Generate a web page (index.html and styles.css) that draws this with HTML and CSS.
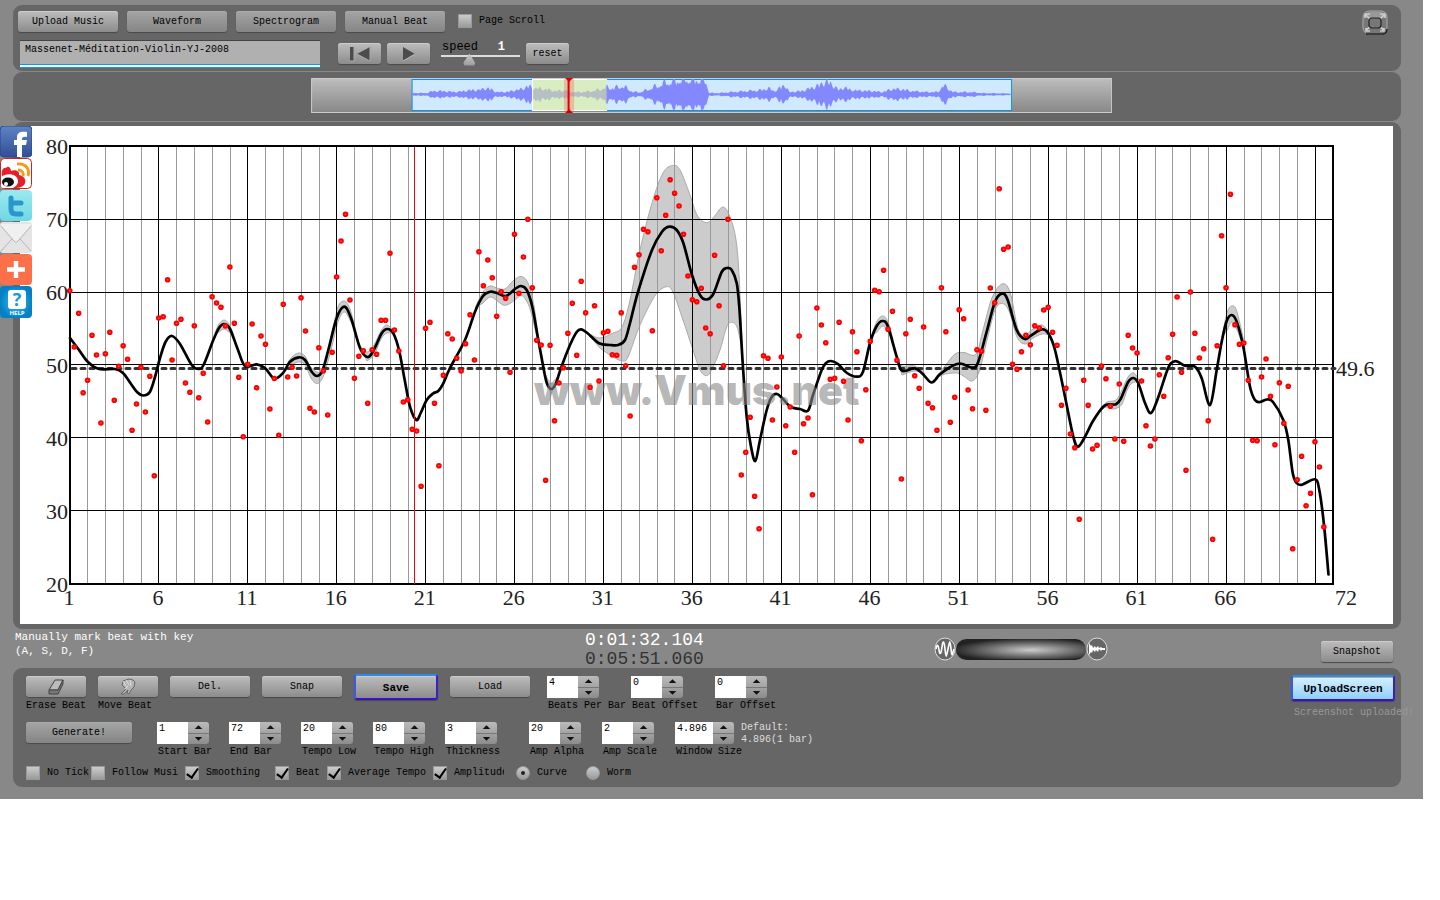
FILE: index.html
```html
<!DOCTYPE html>
<html lang="en">
<head>
<meta charset="utf-8">
<title>Vmus.net</title>
<link rel="stylesheet" href="styles.css">
</head>
<body>
<main class="app">
  <section class="panel toolbar">
    <div class="toolbar-main">
      <div class="tabs">
        <button class="btn tab lit">Upload Music</button>
        <button class="btn tab">Waveform</button>
        <button class="btn tab">Spectrogram</button>
        <button class="btn tab">Manual Beat</button>
        <label class="check"><input type="checkbox"><span>Page Scroll</span></label>
      </div>
      <div class="player">
        <input class="title" type="text" aria-label="Track" value="Massenet-Méditation-Violin-YJ-2008">
        <div class="transport">
          <button class="btn small" aria-label="Rewind"><svg width="22" height="16" viewBox="0 0 22 16"><path d="M1 1h4v14H1zM21 1v14L8 8z" fill="#4c4c4c"/><path d="M5 1v14H1M21 1v14L8 8" fill="none" stroke="#aaa"/></svg></button>
          <button class="btn small" aria-label="Play"><svg width="14" height="16" viewBox="0 0 14 16"><path d="M1 1l12 7-12 7z" fill="#4c4c4c"/><path d="M1 15l12-7" stroke="#bbb"/></svg></button>
        </div>
        <div class="speed">
          <div class="speed-text"><label for="speed">speed</label><output for="speed">1</output></div>
          <input id="speed" type="range" min="0" max="3" step="0.1" value="1">
        </div>
        <button class="btn small">reset</button>
      </div>
    </div>
    <button class="fullscreen" aria-label="Full screen"><svg width="28" height="26" viewBox="0 0 28 26"><rect x="2" y="1" width="24" height="23" rx="6" fill="#777" stroke="#aaa"/><path d="M5 24h17q4-1 4-5" fill="none" stroke="#222" stroke-width="1.5"/><path d="M3 8q0-6 7-6h10q5 1 5 6" fill="#999"/><path d="M4 8V4h5M19 4h5v4M5 18v3h4M19 21h4v-3M5 5l4 4M23 5l-4 4M5 20l4-3M23 20l-4-3" fill="none" stroke="#ccc" stroke-width="1.6"/><rect x="8" y="8" width="12" height="10" rx="3" fill="#777" stroke="#222" stroke-width="1.2"/></svg></button>
  </section>

  <section class="panel overview">
    <svg id="overview" class="overview-wave" viewBox="0 0 801 36" role="img" aria-label="Waveform overview"></svg>
  </section>

  <section class="panel chart-panel">
    <svg id="chart" class="chart" viewBox="20 126 1373 498" role="img" aria-label="Tempo curve"></svg>
  </section>

  <section class="status">
    <p class="hint">Manually mark beat with key<br>(A, S, D, F)</p>
    <div class="times"><div class="now">0:01:32.104</div><div class="total">0:05:51.060</div></div>
    <div class="zoom">
      <svg width="22" height="24" viewBox="0 0 22 24"><ellipse cx="11" cy="12" rx="10" ry="11" fill="#666" stroke="#ddd"/><path d="M2 12c1-5 2-5 3 1s2 4 3-3 2-7 3 2 1 10 3 0 2-9 3 0 1 6 3 0" fill="none" stroke="#fff" stroke-width="1.6"/></svg>
      <input class="wheel" type="range" aria-label="Zoom">
      <svg width="22" height="24" viewBox="0 0 22 24"><ellipse cx="11" cy="12" rx="10" ry="11" fill="#666" stroke="#ddd"/><path d="M3 6l2 3 1-1 1 3 2-2 1 2 2-2 1 2 2-1 1 1h3v2h-3l-1 1-2-2-1 3-2-2-1 2-2-2-1 3-1-1-2 3z" fill="#fff"/></svg>
    </div>
    <button class="btn snapshot">Snapshot</button>
  </section>

  <section class="panel controls">
    <div class="rows">
      <div class="row">
        <div class="tool"><button class="btn" id="erase" aria-label="Erase Beat"><svg width="18" height="16" viewBox="0 0 18 16"><path d="M2 11L8 1h8l-5 10z" fill="#bbb" stroke="#444"/><path d="M2 11h9l5-10v4l-5 10H2z" fill="#777" stroke="#444"/></svg></button><label for="erase">Erase Beat</label></div>
        <div class="tool"><button class="btn" id="move" aria-label="Move Beat"><svg width="18" height="18" viewBox="0 0 18 18"><path d="M2 16l5-5-4-4 1-4 3-1 3-1 4 1 2 2-1 5-3 3-2 4-2-1 1-3-4 4z" fill="#b5b5b5" stroke="#666"/><path d="M4 3l3 5M7 2l3 5M11 2l1 6M6 11l3-3" fill="none" stroke="#ddd"/></svg></button><label for="move">Move Beat</label></div>
        <button class="btn wide">Del.</button>
        <button class="btn wide">Snap</button>
        <button class="btn wide ringed">Save</button>
        <button class="btn wide">Load</button>
        <div class="fields top">
          <div class="field"><div class="spin"><input id="bpb" type="text" value="4"><span class="steps"><button aria-label="More"></button><button aria-label="Less"></button></span></div><label for="bpb">Beats Per Bar</label></div>
          <div class="field"><div class="spin"><input id="beo" type="text" value="0"><span class="steps"><button aria-label="More"></button><button aria-label="Less"></button></span></div><label for="beo">Beat Offset</label></div>
          <div class="field"><div class="spin"><input id="bao" type="text" value="0"><span class="steps"><button aria-label="More"></button><button aria-label="Less"></button></span></div><label for="bao">Bar Offset</label></div>
        </div>
      </div>
      <div class="row second">
        <button class="btn generate">Generate!</button>
        <div class="fields bars">
          <div class="field"><div class="spin"><input id="sb" type="text" value="1"><span class="steps"><button aria-label="More"></button><button aria-label="Less"></button></span></div><label for="sb">Start Bar</label></div>
          <div class="field"><div class="spin"><input id="eb" type="text" value="72"><span class="steps"><button aria-label="More"></button><button aria-label="Less"></button></span></div><label for="eb">End Bar</label></div>
          <div class="field"><div class="spin"><input id="tl" type="text" value="20"><span class="steps"><button aria-label="More"></button><button aria-label="Less"></button></span></div><label for="tl">Tempo Low</label></div>
          <div class="field"><div class="spin"><input id="th" type="text" value="80"><span class="steps"><button aria-label="More"></button><button aria-label="Less"></button></span></div><label for="th">Tempo High</label></div>
          <div class="field"><div class="spin"><input id="tk" type="text" value="3"><span class="steps"><button aria-label="More"></button><button aria-label="Less"></button></span></div><label for="tk">Thickness</label></div>
        </div>
        <div class="fields amps">
          <div class="field"><div class="spin"><input id="aa" type="text" value="20"><span class="steps"><button aria-label="More"></button><button aria-label="Less"></button></span></div><label for="aa">Amp Alpha</label></div>
          <div class="field"><div class="spin"><input id="as" type="text" value="2"><span class="steps"><button aria-label="More"></button><button aria-label="Less"></button></span></div><label for="as">Amp Scale</label></div>
          <div class="field"><div class="spin long"><input id="ws" type="text" value="4.896"><span class="steps"><button aria-label="More"></button><button aria-label="Less"></button></span></div><label for="ws">Window Size</label></div>
        </div>
        <p class="default">Default:<br>4.896(1 bar)</p>
      </div>
      <div class="options">
        <label class="check"><input type="checkbox"><span>No Tick</span></label>
        <label class="check"><input type="checkbox"><span>Follow Musi</span></label>
        <label class="check"><input type="checkbox" checked><span>Smoothing</span></label>
        <label class="check"><input type="checkbox" checked><span>Beat</span></label>
        <label class="check"><input type="checkbox" checked><span>Average Tempo</span></label>
        <label class="check"><input type="checkbox" checked><span class="clipped">Amplitude</span></label>
        <label class="check"><input type="radio" name="shape" checked><span>Curve</span></label>
        <label class="check"><input type="radio" name="shape"><span>Worm</span></label>
      </div>
    </div>
    <div class="upload">
      <button class="btn ringed blue">UploadScreen</button>
      <p class="uploaded">Screenshot uploaded!</p>
    </div>
  </section>

  <nav class="social">
    <a href="#" aria-label="Facebook"><svg viewBox="0 0 32 32"><defs><linearGradient id="fb" x2="0" y2="1"><stop stop-color="#5f83c4"/><stop offset="1" stop-color="#314f93"/></linearGradient></defs><rect width="32" height="31" rx="4" fill="url(#fb)" stroke="#2d4784"/><path d="M17 31V19h-3v-5h3v-3c0-4 3-6 10-5v5c-3-.5-5 0-5 2v1h5l-1 5h-4v12z" fill="#fff"/></svg></a>
    <a href="#" aria-label="Weibo"><svg viewBox="0 0 32 32"><rect x=".5" y=".5" width="31" height="30" rx="4" fill="#fff" stroke="#c22"/><path d="M2 18c-1-5 1-9 4-8 2-3 5 0 5 3 4-2 9 0 8 4 6 1 8 6 5 10-3 3-7 3-10 3z" fill="#e6202a"/><path d="M1 19c6-5 17-3 17 4 0 4-3 6-6 7H3q-2 0-2-2z" fill="#fff"/><ellipse cx="8" cy="24" rx="6" ry="4.5" fill="#111"/><circle cx="6" cy="26" r="2" fill="#fff"/><path d="M18 12c4 0 6 3 5 6M17 6c9-1 13 5 11 12" fill="none" stroke="#f39a1c" stroke-width="2.8"/></svg></a>
    <a href="#" aria-label="Twitter"><svg viewBox="0 0 32 32"><defs><linearGradient id="tw" x2="0" y2="1"><stop stop-color="#9beaf0"/><stop offset="1" stop-color="#6ed8e2"/></linearGradient></defs><rect width="32" height="31" rx="4" fill="url(#tw)"/><path d="M11 8v11q0 5 5 5h5M11 13h10" fill="none" stroke="#2a96cb" stroke-width="5" stroke-linecap="round" stroke-linejoin="round"/></svg></a>
    <a href="#" aria-label="E-mail"><svg viewBox="0 0 32 32"><rect width="32" height="31" rx="3" fill="#e4e4e4"/><path d="M1 4l15 17L31 4V2H1z" fill="#f0f0f0"/><path d="M1 4l13 15q2 3 4 0L31 4M1 29l11-12M31 29L20 17" fill="none" stroke="#b5b5b5"/></svg></a>
    <a href="#" aria-label="Share"><svg viewBox="0 0 32 32"><rect width="32" height="31" rx="4" fill="#fb6f4a"/><path d="M16 7v17M7 15.500h18" stroke="#fff" stroke-width="4.500"/></svg></a>
    <a href="#" aria-label="Help"><svg viewBox="0 0 32 32"><defs><radialGradient id="hp"><stop stop-color="#35c4ef"/><stop offset="1" stop-color="#0580c4"/></radialGradient></defs><rect width="32" height="32" rx="4" fill="url(#hp)"/><rect x="8" y="4" width="18" height="19" rx="3" fill="#fff"/><text x="17" y="20" class="help-q">?</text><text x="17" y="29" class="help-t">HELP</text></svg></a>
  </nav>
</main>
<script src="app.js"></script>
</body>
</html>
```
FILE: styles.css
```css
* { box-sizing: border-box; }
body { margin: 0; background: #fff; font: 10px/12px "Liberation Mono", monospace; color: #000; }
p { margin: 0; }
button, input { font: inherit; color: inherit; }
svg { display: block; }

.app { position: relative; width: calc(100% - 17px); padding: 5px 22px 12px 13px; background: #888; }
.panel { background: #666; border-radius: 9px; margin-bottom: 1px; }

.btn { display: inline-flex; align-items: center; justify-content: center; height: 21px; padding: 1px 0 0; border: 0; border-radius: 3px; background: linear-gradient(#a5a5a5, #858585); box-shadow: 0 1px 1px #4a4a4a, inset 0 1px 0 #aaa; flex: none; }
.btn.lit, .transport .btn, .btn.small, .wide, .tool .btn, .snapshot { background: linear-gradient(#bdbdbd, #8c8c8c); box-shadow: 0 1px 1px #4a4a4a, inset 0 1px 0 #ccc; }

.toolbar { display: flex; justify-content: space-between; align-items: flex-start; padding: 5px 12px 2px 5px; }
.tabs { display: flex; align-items: center; gap: 9px; height: 22px; }
.tab { width: 100px; }
.check { display: flex; align-items: center; gap: 7px; white-space: nowrap; }
.tabs .check { margin-left: 4px; }
.check input { appearance: none; position: relative; flex: none; width: 14px; height: 14px; margin: 0; background: linear-gradient(#ccc, #9a9a9a); border: 1px solid #999; }
.check input[type=radio] { border-radius: 50%; }
.check input[type=checkbox]:checked::after { content: ""; position: absolute; left: 3px; top: -1px; width: 5px; height: 10px; border: solid #000; border-width: 0 2px 2px 0; transform: rotate(35deg); }
.check input[type=radio]:checked::after { content: ""; position: absolute; left: 4px; top: 4px; width: 4px; height: 4px; border-radius: 50%; background: #222; }
.player { display: flex; align-items: center; gap: 6px; height: 31px; padding-left: 2px; margin-top: 6px; }
.title { width: 300px; height: 28px; margin-right: 12px; padding: 0 5px 8px; border: 0; border-top: 1px solid #444; border-bottom: 1px solid #0a97f5; background: linear-gradient(#b0b0b0 0 23px, #0a97f5 23px 24px, #fff 24px); }
.transport { display: flex; gap: 6px; margin-right: 5px; }
.small { width: 43px; }
.speed { width: 79px; }
.speed-text { display: flex; justify-content: space-between; padding: 0 15px 0 1px; font-size: 12px; line-height: 12px; }
.speed-text output { color: #fff; font-weight: bold; }
.speed input { appearance: none; display: block; width: 100%; height: 14px; margin: 0; background: linear-gradient(transparent 2px, #ddd 2px 4px, transparent 4px); }
.speed input::-webkit-slider-thumb { appearance: none; width: 12px; height: 12px; background: linear-gradient(#ccc, #999); clip-path: polygon(50% 0, 100% 80%, 90% 100%, 10% 100%, 0 80%); }
.fullscreen { padding: 0; border: 0; background: none; }

.overview { display: flex; justify-content: center; padding: 6px 0 7px 9px; }
.overview-wave { width: 58.1%; height: auto; }

.chart-panel { padding: 4px 8px 5px 7px; margin: 0; }
.chart { width: 100%; height: auto; background: #fff; }
.tick { font-family: "Liberation Serif", serif; font-size: 22px; fill: #222; }
.watermark { font-family: "Inter", sans-serif; font-weight: 900; font-size: 41px; fill: #888; fill-opacity: .62; }

.status { display: grid; grid-template-columns: 572fr 349fr 387fr 72px; align-items: start; height: 39px; padding-right: 8px; }
.hint { padding: 1px 0 0 2px; color: #fff; font-size: 11px; line-height: 14px; }
.times { padding-top: 2px; font-size: 18px; line-height: 19px; }
.now { color: #fff; }
.total { color: #333; }
.zoom { display: flex; align-items: center; padding-top: 8px; }
.wheel { appearance: none; width: 130px; height: 21px; margin: 0; border-radius: 11px; border-bottom: 1px solid #222; background: radial-gradient(ellipse at 58% 55%, #ccc, #888 30%, #222 75%); }
.wheel::-webkit-slider-thumb { appearance: none; width: 1px; height: 1px; opacity: 0; }
.snapshot { margin-top: 12px; }

.controls { display: flex; justify-content: space-between; padding: 8px 6px 7px 13px; margin: 0; }
.row { display: flex; gap: 12px; height: 46px; }
.row.second { height: 44px; }
.tool { display: flex; flex-direction: column; width: 60px; white-space: nowrap; gap: 3px; }
.wide { width: 80px; }
.btn.ringed { width: 84px; height: 26px; margin-top: -2px; border: 2px solid; border-color: #2b8bea #3a20c8 #3a10c8 #3a5ae0; font-weight: bold; font-size: 11px; }
.fields { display: flex; }
.top { margin-left: 5px; }
.top .field { width: 84px; }
.generate { width: 106px; }
.bars { width: 360px; margin-left: 13px; }
.field { width: 73px; white-space: nowrap; }
.field label { display: block; padding-left: 1px; margin-top: 2px; }
.spin { display: flex; width: 52px; height: 22px; }
.spin.long { width: 59px; }
.spin > input { flex: 1; min-width: 0; padding: 0 0 8px 2px; border: 0; background: #fff; }
.steps { display: flex; flex-direction: column; width: 21px; border-radius: 0 3px 3px 0; overflow: hidden; background: linear-gradient(#bbb, #8c8c8c); }
.steps button { flex: 1; display: flex; align-items: center; justify-content: center; padding: 0; border: 0; background: none; }
.steps button::before { content: ""; width: 8px; height: 4px; background: #111; clip-path: polygon(50% 0, 100% 100%, 0 100%); }
.steps button + button { border-top: 1px solid #777; }
.steps button + button::before { clip-path: polygon(0 0, 100% 0, 50% 100%); }
.default { margin-left: -19px; color: #ddd; }
.options { display: flex; }
.options .check { width: 90px; }
.options .check:nth-child(1) { width: 65px; }
.options .check:nth-child(2) { width: 94px; }
.options .check:nth-child(4) { width: 52px; }
.options .check:nth-child(5) { width: 106px; }
.options .check:nth-child(6) { width: 83px; }
.options .check:nth-child(7), .options .check:nth-child(8) { width: 70px; }
.clipped { width: 50px; overflow: hidden; }
.upload { width: 104px; }
.btn.ringed.blue { width: 104px; background: linear-gradient(#d8f1ff, #8fd0fb); margin-top: -1px; }
.uploaded { padding: 6px 0 0 3px; color: #999; white-space: nowrap; }

.social { position: absolute; left: 0; top: 126px; width: 32px; }
.social a { display: block; height: 32px; }
.help-q { font: bold 18px "Open Sans", sans-serif; fill: #149bd7; text-anchor: middle; }
.help-t { font: bold 6px "Open Sans", sans-serif; fill: #fff; text-anchor: middle; }
```
FILE: app.js
```js
const beats = [290.7,347,313.3,392.7,380.3,335.3,355,423,353.7,332.3,400.3,366.3,345.7,359.3,430.3,404,367.3,412,376.3,475.7,
318,316.7,279.7,360,323.3,319.3,383,392.3,325.7,397.7,373.3,422,296.7,303,307.3,326,267,323.3,377.3,436.7,
364.3,324,387.7,336,344.3,409,378.5,435.3,304.3,377,367.3,376,297.7,331,408.3,412,347.7,370.7,415,352.3,
277,241,214.3,300,378.3,356.3,350.7,403.3,349.7,354.3,320.3,320.3,253.3,330,351,402,399.7,429.3,431,486.3,
328.3,322.3,403.3,465.7,375.3,333.7,339,358.3,371,343.7,314.7,360,251.7,285.7,260,277.7,316.3,291.7,298.3,372.3,
234.3,293.3,257,219.3,287.7,340.3,345,480.3,345.3,420.7,383,367.7,333.3,303.3,355.3,281.3,312.7,387.3,305.7,381,
332.7,331.3,354.7,355.3,312.7,365.7,416,267.3,254.7,229.3,231.7,330.7,197.7,250.7,215.3,179.7,193.3,206,234.3,276,
299.7,301.7,288.3,328,333.7,255.3,305.7,365.7,219.3,null,null,475,452.3,417.3,496.3,528.7,355.7,358.3,420,387,
357,425.7,407,452.3,336,423.7,418,494.7,308,325,342.7,379.3,378.3,322.3,381.3,420,331.7,351.7,440.7,389.7,
341.3,290.3,291.7,270.3,329.3,311.3,360.3,479,333.7,319.3,375.7,388.3,327,403.3,407.7,430.3,287.7,331.7,422.3,397.3,
309.7,318.7,390,408.7,349.7,351.3,410.3,288,302.7,188.7,249.3,247,364.3,369.3,351.7,335.3,344.7,325.7,328,310,
307.3,332.3,345.3,405.3,388.3,434,447.7,519.3,380.3,405.3,449,445.3,366,378.7,406.3,439,384,441.3,335.3,348,
353,381,425.7,446,439,374.7,396.3,357.7,334.3,297,372.3,470.3,292,333.3,358,348.7,420.7,539.3,345.7,235.7,
287.7,194.3,324.7,344.3,343,380.3,440.3,440.7,377,359,396.3,444.7,382.7,423.3,386.3,548.7,479.7,456.3,505.7,493.3,
441.7,467,527];

const curve = [70,338,79,350,88,362,99,369,115,369,123,373,131,384,137,392,143.3,395.5,150,391.7,155,377,160,358,165.5,342,172,336,180,344,191.7,365,199,369,204,364,213.3,340,219,328,224,324,230,329,238,350,245,366,256.7,364.3,265,368,274.3,378.5,283.3,372.7,290,361.7,299,357.3,305,360,311.7,371.7,317,376,322.3,371,328.3,350,336.7,318,344.3,306.7,351,318,360,348,367.3,357,373.3,351,381.7,333.3,387.3,329,393.3,333.3,399,350,404.7,380,410,406.7,416.3,420,420.7,413,426.7,400,433,393.5,438.3,391,443.3,383.3,450,368,465,340,475,311.7,483,296,490,291.7,497,293,506,296,515,289,521,286,526.7,290,532.3,306.7,538.3,340,543.3,367,546.7,382.7,551,389,555.7,384,561,368,570,345,576.7,332,581,329.3,587,332.7,599,343.3,610,345,618,345,625,340,630,323,638,292,652,250,662,231.7,669.3,226.7,676.7,230,683.3,243,692,275,700,295,706.3,299.5,713.3,294,721.7,272,727,268,731.7,270,736.7,283,739.3,307,742.7,363,746.7,417,750.7,445,755.3,461,760,440,766.7,410,771.7,397,777,394,783,399,790.7,407,800,409,808,410.7,813,395,821.7,370,826,363,831,361,838,364,847,373,856.7,376.7,863,371.7,870,343,876.7,326,882.7,321,888,326.7,896.7,356.7,902,370.7,915,368.3,923,374.3,931.7,382.5,940,374.3,950,367.3,960,363.5,972.7,367.7,978.3,361.7,986.7,331.7,995,301.7,1002.3,293.7,1007.7,300,1016.7,330,1025,339,1031.7,335,1041.7,329.3,1048.3,333.3,1055,350,1065,396.7,1073.3,436.7,1078,446.7,1085,436.7,1093,421,1103.3,406.7,1110,404.3,1116,404.3,1121,398.3,1128,382.3,1133.3,378,1138.3,383.3,1145,403,1151,413,1158,398,1166.7,371.7,1171,363.3,1176.7,361.3,1185,365.7,1195,366.7,1201.7,378.3,1210,405,1216.7,370,1221.7,341.7,1226.7,321,1231.7,315,1236.7,321.7,1243.3,346.7,1250,386.7,1255,400,1260,402,1267,399.5,1273,402,1283.3,420,1288.3,440,1292.7,473,1296.7,483,1302,484.7,1315,479.3,1319.3,490,1324,525,1328.5,574.5];

/* amplitude bands: closed outlines around the curve */
const bands = [
[587,333,600,338,613,333,622,327,630,300,640,250,652,203,663,173,672.7,165.5,680,170,690,195,697,215,706,222.7,713,218,722.7,207,730,217,736,240,739.3,280,742.7,363,741,345,737,327,731.7,322.3,726.7,327,720,350,712,369,706.7,375.7,700,370,693,350,683,320,673,292,666.7,286.7,657,293,647,310,638,330,628,357,622.7,361,613,357,600,348],
[475,308,483,292,490,286,497,288,505,289,513,281,521,276.5,528,283,534,306,538,340,531,312,526,300,521,295.5,515,300,508,304.5,503,305,496,300,490,297,483,303],
[215,333,219,324,224,320,229,324,233,335,229,332,224,329,219,332],
[288,362,293,356,299,353,305,356,310,366,317,372,323,368,332,333,338,307,344.3,301,350,309,355,330,350,320,344.3,312,338,322,331,350,323,377,317,383.5,311,378,305,365,299,362,293,364],
[360,346,367,352,374,345,381,331,387,325,395,333,387,333,381,339,374,355,367,361],
[545,374,551,383,557,378,551,394],
[872,335,877,321,883,316,888,322,893,340,888,332,883,326,877,332],
[897,358,902,366,915,366,925,374,915,371,902,375],
[935,378,945,366,955,354,964,352.5,976,354,983,330,992,298,1002,284,1010,292,1018,329,1025,335,1033,329,1042,325,1050,334,1042,334,1033,338,1025,344,1017,337,1009,311,1002,303.5,995,310,987,340,979,372,972,381,965,377,957,373,945,374],
[1100,409,1107,402,1116,400,1122,390,1128,377,1134,373,1140,383,1134,382,1128,388,1122,404,1114,409,1107,407],
[1222,337,1227,313,1231.7,306,1237,312,1245,349,1237,330,1231.7,322,1227,331]
];

const wave = [101,1,115,1,122,3,130,3,145,2,160,4,168,4,174,6,180,5,185,2,195,2,210,5,217,8,223,6,235,5,245,3,255,4,260,2,270,2,280,3,290,5,296,7,302,6,310,8,316,6,322,2,330,2,340,6,350,10,360,13,370,15,385,15,392,16,396,10,398,1,408,1,420,2,435,3,450,4,457,6,463,3,467,5,474,10,478,2,490,3,500,6,508,9,515,13,522,9,528,4,533,7,540,4,560,3,572,2,580,5,590,5,600,3,615,2,627,2,632,9,637,6,642,2,660,2,670,1,700,.5];

function smooth(p) {
  let d = `M${p[0]} ${p[1]}`;
  const n = p.length / 2, at = i => [p[2 * Math.max(0, Math.min(n - 1, i))], p[2 * Math.max(0, Math.min(n - 1, i)) + 1]];
  for (let i = 0; i < n - 1; i++) {
    const [a, b, c, e] = [at(i - 1), at(i), at(i + 1), at(i + 2)];
    d += `C${b[0] + (c[0] - a[0]) / 6} ${b[1] + (c[1] - a[1]) / 6} ${c[0] - (e[0] - b[0]) / 6} ${c[1] - (e[1] - b[1]) / 6} ${c[0]} ${c[1]}`;
  }
  return d;
}

let s = '';
const bar = i => Math.round(69.5 + 17.79 * i) + 0.5;
for (const b of bands) s += `<path d="${smooth(b)}Z" fill="#ccc" stroke="#aaa"/>`;
for (let i = 1; i < 71; i++) s += `<path d="M${bar(i)} 147V584" stroke="${i % 5 ? '#999' : '#000'}"/>`;
for (const y of [219.5, 292.5, 364.5, 437.5, 510.5]) s += `<path d="M70 ${y}H1333" stroke="#000"/>`;
s += '<rect x="70" y="146" width="1263" height="438" fill="none" stroke="#000" stroke-width="2"/>';
s += '<path d="M72 368.500H1335" stroke="#333" stroke-width="3" stroke-dasharray="4 5" stroke-linecap="round"/>';
s += `<path d="${smooth(curve)}" fill="none" stroke="#000" stroke-width="2.700" stroke-linecap="round"/>`;
s += '<text class="watermark" x="534" y="405">www.Vmus.net</text>';
s += '<path d="M414.500 147V584" stroke="#f00"/>';
beats.forEach((y, k) => { if (y !== null) s += `<circle cx="${69.8 + 4.447 * k}" cy="${y}" r="1.800" fill="#e66" stroke="#f00" stroke-width="2"/>`; });
[80, 70, 60, 50, 40, 30, 20].forEach((v, i) => { s += `<text class="tick" x="68" y="${154 + 73 * i}" text-anchor="end">${v}</text>`; });
for (let v = 1; v <= 66; v += 5) s += `<text class="tick" x="${69 + 17.79 * (v - 1)}" y="605" text-anchor="middle">${v}</text>`;
s += '<text class="tick" x="1346" y="605" text-anchor="middle">72</text><text class="tick" x="1336" y="376">49.6</text>';
document.getElementById('chart').innerHTML = s;

let top1 = '', low = '';
for (let i = 0; i < wave.length - 2; i += 2) {
  for (let x = wave[i]; x < wave[i + 2]; x++) {
    const t = (x - wave[i]) / (wave[i + 2] - wave[i]);
    const a = Math.min(15, (wave[i + 1] + t * (wave[i + 3] - wave[i + 1])) * (0.6 + 0.4 * Math.abs(Math.sin(x * 12.9) + Math.sin(x * 5.3))));
    top1 += `L${x} ${16 - a}`;
    low = `L${x} ${16.7 + a}` + low;
  }
}
document.getElementById('overview').innerHTML = `
<defs><linearGradient id="track" x2="0" y2="1"><stop stop-color="#bdbdbd"/><stop offset="1" stop-color="#888"/></linearGradient></defs>
<rect x=".5" y=".5" width="800" height="34" fill="url(#track)" stroke="#ccc"/>
<rect x="101" y="1.500" width="599.500" height="31" fill="#cfeaff" stroke="#0a93ee"/>
<path d="M101 16${top1}L700 16${low}Z" fill="#8488ff"/>
<rect x="221.500" y="1" width="74" height="32" fill="#e0ee90" fill-opacity=".55"/>
<path d="M221.500 1v32M221 1.500h75M221 32.500h75" stroke="#fff"/>
<rect x="253" y="1" width="10" height="33" fill="#e66" fill-opacity=".35"/>
<path d="M257.500 1v33" stroke="#d00" stroke-width="2"/>
<path d="M254 0h8l-4 4zM254 35h8l-4-4z" fill="#d00"/>`;
```
